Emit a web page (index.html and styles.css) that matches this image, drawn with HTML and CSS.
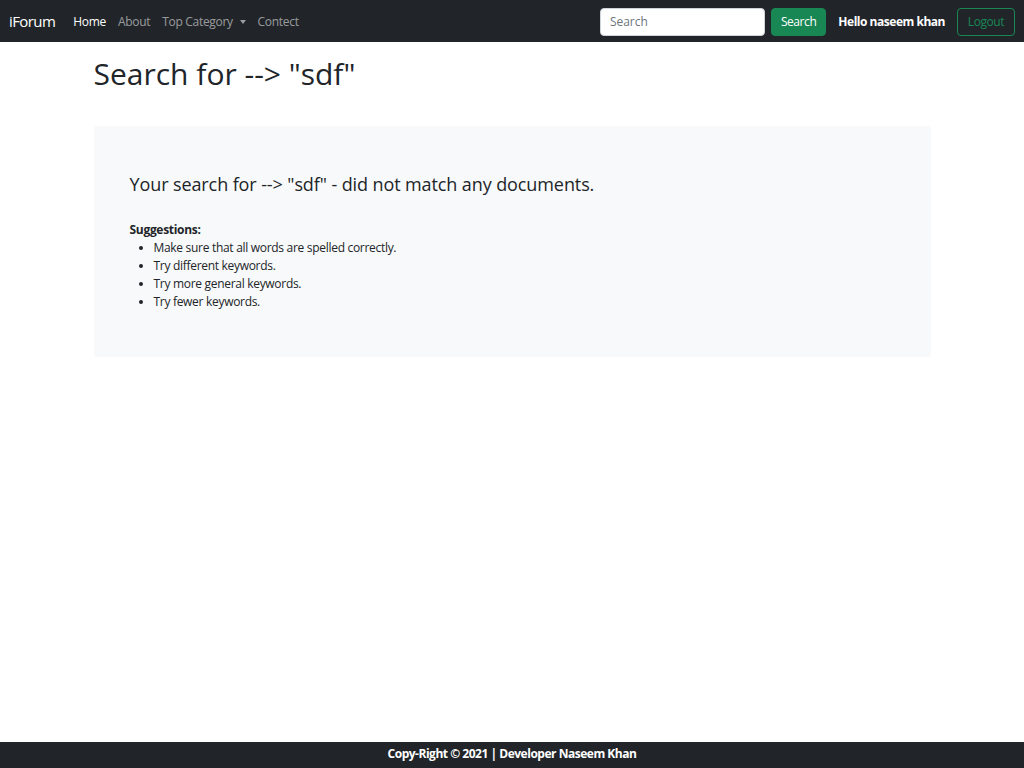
FILE: index.html
```html
<!DOCTYPE html>
<html lang="en">
<head>
<meta charset="utf-8">
<title>iForum - Search</title>
<link rel="stylesheet" href="styles.css">
</head>
<body>
<nav class="navbar">
  <div class="nav-left">
    <a class="brand" href="#">iForum</a>
    <ul class="nav-links">
      <li><a class="nav-link active" href="#">Home</a></li>
      <li><a class="nav-link" href="#">About</a></li>
      <li><a class="nav-link dropdown" href="#">Top Category <span class="caret"></span></a></li>
      <li><a class="nav-link" href="#">Contect</a></li>
    </ul>
  </div>
  <div class="nav-right">
    <form class="search-form">
      <input class="search-input" type="search" placeholder="Search">
      <button class="btn btn-success" type="button">Search</button>
    </form>
    <span class="hello">Hello naseem khan</span>
    <button class="btn btn-outline" type="button">Logout</button>
  </div>
</nav>

<main class="container">
  <h1 class="page-title">Search for --&gt; "sdf"</h1>
  <div class="jumbotron">
    <h4 class="no-result">Your search for --&gt; "sdf" - did not match any documents.</h4>
    <p class="sugg-title">Suggestions:</p>
    <ul class="sugg-list">
      <li>Make sure that all words are spelled correctly.</li>
      <li>Try different keywords.</li>
      <li>Try more general keywords.</li>
      <li>Try fewer keywords.</li>
    </ul>
  </div>
</main>

<footer class="footer">
  <p>Copy-Right © 2021 | Developer Naseem Khan</p>
</footer>
</body>
</html>
```

FILE: styles.css
```css
* { box-sizing: border-box; }

html, body { height: 100%; }

body {
  margin: 0;
  font-family: "Segoe UI", "Open Sans", sans-serif;
  font-size: 12px;
  line-height: 1.5;
  letter-spacing: -0.025em;
  color: #212529;
  background: #fff;
  display: flex;
  flex-direction: column;
}

a { text-decoration: none; }

.navbar {
  height: 42px;
  background: #212529;
  display: flex;
  align-items: center;
  justify-content: space-between;
  padding: 1px 9px 0;
}

.nav-left, .nav-right {
  display: flex;
  align-items: center;
}

.brand {
  color: #fff;
  font-size: 15px;
  letter-spacing: -0.04em;
  margin-right: 12px;
}

.nav-links {
  list-style: none;
  margin: 0;
  padding: 0;
  display: flex;
}

.nav-link {
  display: block;
  padding: 6px;
  color: rgba(255,255,255,.55);
  font-size: 12px;
}

.nav-link.active { color: #fff; }

.caret {
  display: inline-block;
  margin-left: 4px;
  vertical-align: 2px;
  border-top: 4px solid;
  border-left: 3.5px solid transparent;
  border-right: 3.5px solid transparent;
}

.search-form {
  display: flex;
  align-items: center;
  gap: 6px;
  margin: 0;
}

.search-input {
  width: 165px;
  height: 28px;
  padding: 4px 9px;
  font: inherit;
  font-size: 12px;
  color: #212529;
  border: 1px solid #ced4da;
  border-radius: 4px;
  background: #fff;
  outline: none;
}

.search-input::placeholder { color: #6c757d; }

.btn {
  height: 28px;
  padding: 0 9px;
  font: inherit;
  font-size: 12px;
  letter-spacing: -0.035em;
  border-radius: 4px;
  border: 1px solid transparent;
  cursor: pointer;
}

.btn-success {
  background: #198754;
  border-color: #198754;
  color: #fff;
}

.hello {
  color: #fff;
  font-weight: 700;
  letter-spacing: -0.04em;
  margin: 0 12px;
}

.btn-outline {
  background: transparent;
  border-color: #198754;
  color: #198754;
  width: 58px;
}

.container {
  flex: 1;
  width: 837px;
  margin: 0 auto;
}

.page-title {
  font-size: 30px;
  font-weight: 500;
  line-height: 1.2;
  letter-spacing: 0;
  margin: 14px 0 34px;
}

.jumbotron {
  background: #f8f9fa;
  padding: 48px 36px 34px;
  border-radius: 2px;
}

.no-result {
  font-size: 18px;
  font-weight: 500;
  line-height: 1.2;
  letter-spacing: -0.1px;
  margin: 0 0 25px;
}

.sugg-title {
  margin: 0;
  font-weight: 700;
}

.sugg-list {
  margin: 0 0 12px;
  padding-left: 24px;
}

.footer {
  background: #212529;
  color: #fff;
  text-align: center;
  font-weight: 700;
  letter-spacing: -0.04em;
}

.footer p {
  margin: 0;
  padding: 3px 0 5px;
  line-height: 18px;
}
```
